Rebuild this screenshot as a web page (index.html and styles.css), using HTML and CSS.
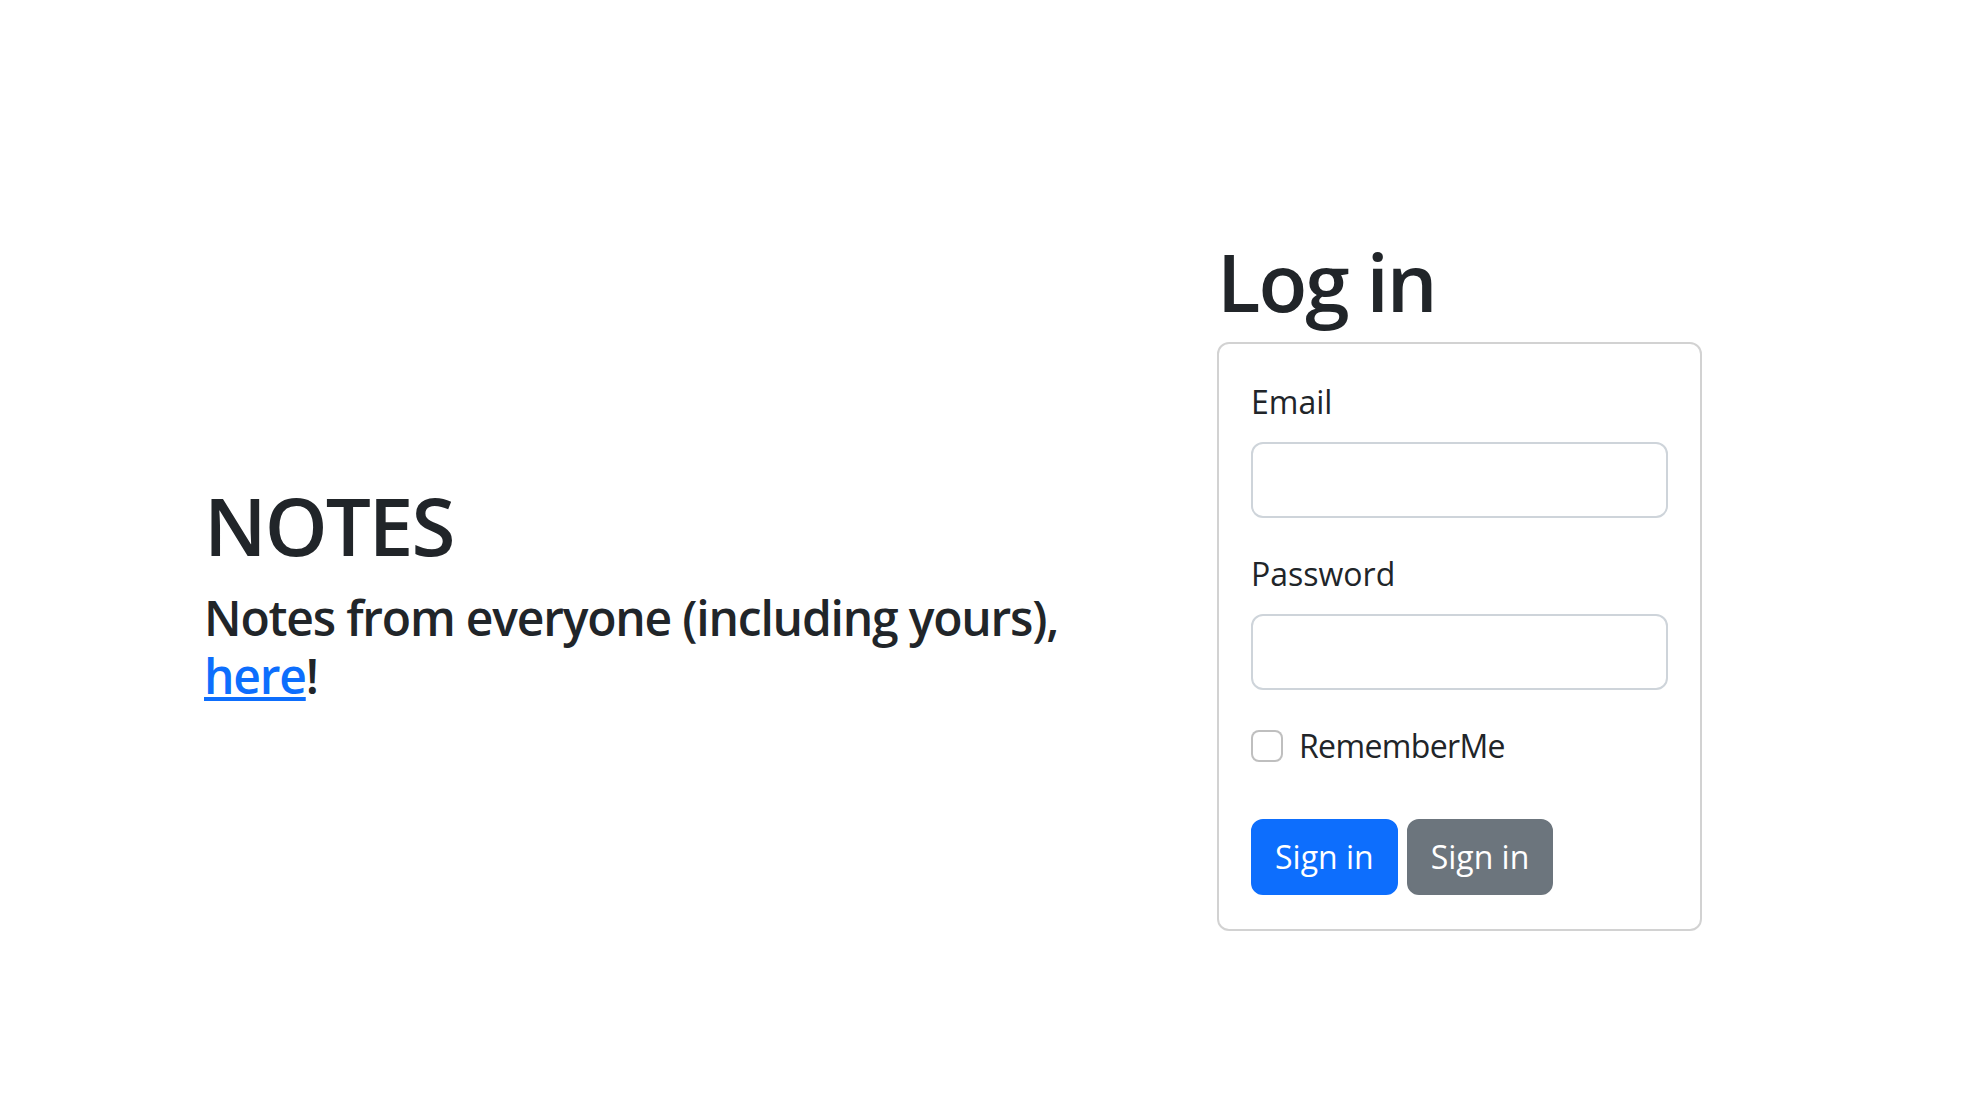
FILE: index.html
```html
<!DOCTYPE html>
<html lang="en">
<head>
  <meta charset="UTF-8">
  <meta name="viewport" content="width=device-width, initial-scale=1.0">
  <title>Log in</title>
  <link rel="stylesheet" href="styles.css">
</head>
<body>
  <div class="page">
    <div class="intro">
      <h1>NOTES</h1>
      <h4>Notes from everyone (including yours), <a href="#">here</a>!</h4>
    </div>

    <div class="login">
      <h1>Log in</h1>
      <div class="card">
        <form id="loginForm">
          <div class="field">
            <label for="email">Email</label>
            <input type="email" id="email" name="email">
          </div>
          <div class="field">
            <label for="password">Password</label>
            <input type="password" id="password" name="password">
          </div>
          <div class="check">
            <input type="checkbox" id="rememberMe" name="rememberMe">
            <label for="rememberMe">RememberMe</label>
          </div>
          <div class="actions">
            <button type="submit" class="button">Sign in</button>
            <button type="button" class="button secondary">Sign in</button>
          </div>
        </form>
      </div>
    </div>
  </div>
</body>
</html>
```

FILE: styles.css
```css
* {
  box-sizing: border-box;
}
body {
  margin: 0;
  font-family: "Open Sans", "Noto Sans", Arial, sans-serif;
  font-size: 32px;
  line-height: 1.5;
  color: #212529;
  background-color: #fff;
}
h1 {
  margin: 0 0 13px;
  font-size: 80px;
  font-weight: 600;
  line-height: 1.2;
  letter-spacing: -0.025em;
}
h4 {
  margin: 0;
  font-size: 48px;
  font-weight: 600;
  line-height: 1.2;
  letter-spacing: -0.025em;
}
a {
  color: #0d6efd;
}
.page {
  display: flex;
  align-items: center;
  padding: 233px 0 0 204px;
}
.intro {
  width: 1013px;
  padding: 18px 48px 0 0;
}
.intro h1 {
  margin-bottom: 16px;
}
.login {
  width: 485px;
}
.card {
  border: 2px solid rgba(0, 0, 0, 0.175);
  border-radius: 12px;
  padding: 34px 32px;
}
.field {
  margin-bottom: 32px;
}
.field label {
  display: block;
  margin-bottom: 16px;
}
.field input {
  display: block;
  width: 100%;
  padding: 12px 24px;
  font: inherit;
  color: #212529;
  border: 2px solid #ced4da;
  border-radius: 12px;
  background-color: #fff;
}
.check {
  display: flex;
  align-items: flex-start;
  gap: 16px;
  min-height: 48px;
  margin-bottom: 49px;
  letter-spacing: -0.02em;
}
.check input {
  appearance: none;
  width: 32px;
  height: 32px;
  margin: 8px 0 0;
  border: 2px solid rgba(0, 0, 0, 0.25);
  border-radius: 8px;
  background-color: #fff;
}
.actions {
  display: flex;
  gap: 9px;
}
.button {
  font: inherit;
  color: #fff;
  background-color: #0d6efd;
  padding: 12px 22px;
  border: 2px solid #0d6efd;
  border-radius: 12px;
  cursor: pointer;
}
.button.secondary {
  background-color: #6c757d;
  border-color: #6c757d;
}
```
